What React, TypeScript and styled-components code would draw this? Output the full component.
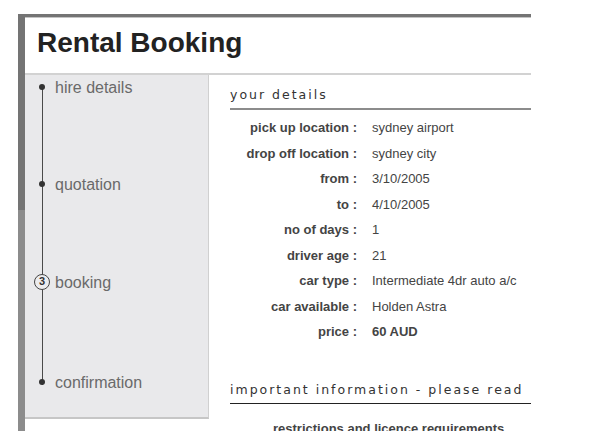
import React from "react";
import styled, { createGlobalStyle } from "styled-components";

const GlobalStyle = createGlobalStyle`
  html, body {
    margin: 0;
    padding: 0;
    background: #ffffff;
    overflow: hidden;
  }
  body {
    font-family: "Liberation Sans", Arial, sans-serif;
  }
`;

const Page = styled.div`
  width: 601px;
  height: 431px;
  padding: 14px 0 0 18px;
  box-sizing: border-box;
  overflow: hidden;
`;

const Frame = styled.div`
  width: 513px;
  height: 417px;
  box-sizing: border-box;
  padding: 3px 0 0 7px;
  background: linear-gradient(to bottom, #747474 0, #747474 196px, #8c8c8c 196px, #8c8c8c 100%);
  overflow: hidden;
`;

const Inner = styled.div`
  height: 100%;
  background: #ffffff;
  border-top: 1px solid #c4c4c4;
  display: flex;
  flex-direction: column;
  overflow: hidden;
`;

const Header = styled.header`
  height: 57px;
  box-sizing: border-box;
  padding: 9px 0 0 12px;
  border-bottom: 2px solid #d2d2d2;
  flex: none;
`;

const Title = styled.h1`
  margin: 0;
  font-family: "Liberation Sans", Arial, sans-serif;
  font-size: 28px;
  line-height: 32px;
  font-weight: bold;
  color: #222222;
`;

const Body = styled.div`
  flex: 1;
  display: grid;
  grid-template-columns: 184px 1fr;
  align-items: start;
  overflow: hidden;
`;

const Sidebar = styled.nav`
  height: 344px;
  box-sizing: border-box;
  background: #e9e9eb;
  border-right: 1px solid #d0d0d0;
  border-bottom: 2px solid #c6c6c6;
`;

const Steps = styled.ol`
  position: relative;
  list-style: none;
  margin: 0;
  padding: 2px 0 0 9px;
  display: flex;
  flex-direction: column;
  gap: 77px;
`;

const Rail = styled.span`
  position: absolute;
  left: 16.5px;
  top: 12px;
  width: 1.3px;
  height: 298px;
  background: #4a4a4a;
`;

const Step = styled.li<{ $push?: number }>`
  position: relative;
  display: flex;
  align-items: center;
  gap: 5px;
  height: 20px;
  margin-top: ${(p) => p.$push ?? 0}px;
`;

const MarkerBox = styled.span`
  width: 16px;
  height: 16px;
  display: flex;
  align-items: center;
  justify-content: center;
  flex: none;
`;

const Dot = styled.span`
  width: 6px;
  height: 6px;
  border-radius: 50%;
  background: #333333;
`;

const NumberBadge = styled.span`
  width: 16px;
  height: 16px;
  box-sizing: border-box;
  border-radius: 50%;
  border: 1.2px solid #444444;
  background: #ececee;
  display: flex;
  align-items: center;
  justify-content: center;
  font-family: "Liberation Sans", Arial, sans-serif;
  font-size: 11px;
  font-weight: bold;
  color: #333333;
  line-height: 1;
`;

const StepLabel = styled.span`
  font-family: "Liberation Sans", Arial, sans-serif;
  font-size: 16px;
  color: #6a6a6a;
  line-height: 20px;
  padding-top: 2px;
`;

const Main = styled.main`
  padding: 10px 0 0 21px;
  overflow: hidden;
  height: 100%;
  box-sizing: border-box;
`;

const SectionTitle = styled.h2<{ $dark?: boolean; $gap?: number }>`
  margin: ${(p) => p.$gap ?? 0}px 0 0 0;
  font-family: "DejaVu Sans", Verdana, sans-serif;
  font-size: 12.5px;
  font-weight: normal;
  letter-spacing: 2px;
  line-height: 20px;
  color: #333333;
  padding-bottom: 3px;
  border-bottom: ${(p) => (p.$dark ? "1px solid #222222" : "2px solid #8c8c8c")};
  white-space: nowrap;
`;

const Details = styled.dl`
  margin: 5px 0 0 0;
  display: grid;
  grid-template-columns: 127px 1fr;
  grid-auto-rows: 25.5px;
  column-gap: 15px;
  align-items: center;
  font-family: "Liberation Sans", Arial, sans-serif;
  font-size: 13px;
  color: #444444;
`;

const Term = styled.dt`
  font-weight: bold;
  text-align: right;
  white-space: nowrap;
`;

const Value = styled.dd<{ $strong?: boolean }>`
  margin: 0;
  font-weight: ${(p) => (p.$strong ? "bold" : "normal")};
  white-space: nowrap;
`;

const Notice = styled.p`
  margin: 17px 0 0 43px;
  font-family: "Liberation Sans", Arial, sans-serif;
  font-size: 13px;
  font-weight: bold;
  line-height: 16px;
  color: #444444;
  white-space: nowrap;
`;

const details: { label: string; value: string; strong?: boolean }[] = [
  { label: "pick up location :", value: "sydney airport" },
  { label: "drop off location :", value: "sydney city" },
  { label: "from :", value: "3/10/2005" },
  { label: "to :", value: "4/10/2005" },
  { label: "no of days :", value: "1" },
  { label: "driver age :", value: "21" },
  { label: "car type :", value: "Intermediate 4dr auto a/c" },
  { label: "car available :", value: "Holden Astra" },
  { label: "price :", value: "60 AUD", strong: true },
];

export default function App() {
  return (
    <>
      <GlobalStyle />
      <Page>
        <Frame>
          <Inner>
            <Header>
              <Title>Rental Booking</Title>
            </Header>
            <Body>
              <Sidebar>
                <Steps>
                  <Rail />
                  <Step>
                    <MarkerBox>
                      <Dot />
                    </MarkerBox>
                    <StepLabel>hire details</StepLabel>
                  </Step>
                  <Step>
                    <MarkerBox>
                      <Dot />
                    </MarkerBox>
                    <StepLabel>quotation</StepLabel>
                  </Step>
                  <Step $push={0.5}>
                    <MarkerBox>
                      <NumberBadge>3</NumberBadge>
                    </MarkerBox>
                    <StepLabel>booking</StepLabel>
                  </Step>
                  <Step $push={3}>
                    <MarkerBox>
                      <Dot />
                    </MarkerBox>
                    <StepLabel>confirmation</StepLabel>
                  </Step>
                </Steps>
              </Sidebar>
              <Main>
                <SectionTitle>your details</SectionTitle>
                <Details>
                  {details.map((d) => (
                    <React.Fragment key={d.label}>
                      <Term>{d.label}</Term>
                      <Value $strong={d.strong}>{d.value}</Value>
                    </React.Fragment>
                  ))}
                </Details>
                <SectionTitle $dark $gap={35}>
                  important information - please read
                </SectionTitle>
                <Notice>restrictions and licence requirements</Notice>
              </Main>
            </Body>
          </Inner>
        </Frame>
      </Page>
    </>
  );
}
